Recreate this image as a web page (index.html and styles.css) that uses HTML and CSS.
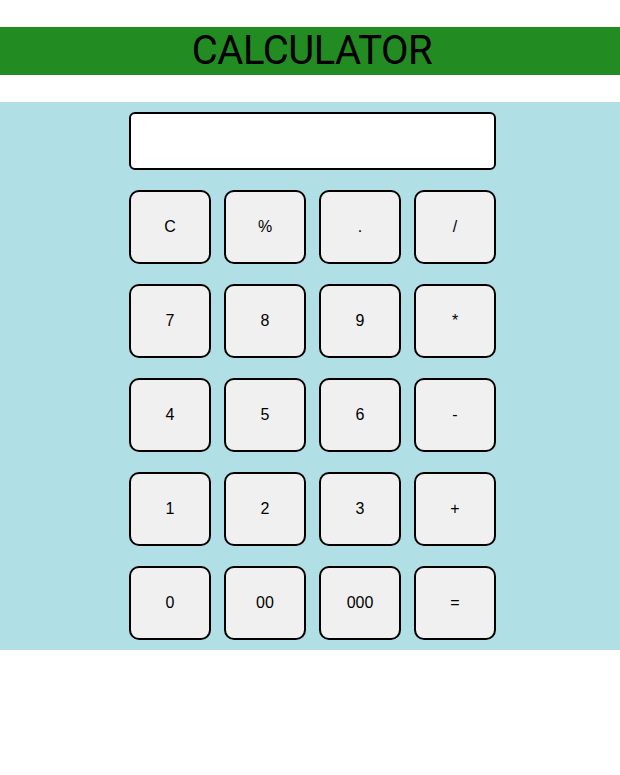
FILE: index.html
```html
<!DOCTYPE html>
<html>
<head>
<meta charset="utf-8">
<link rel="stylesheet" href="styles.css">
</head>
<body>
<h1 class="title">CALCULATOR</h1>
<div class="calc">
  <div class="pad">
    <div class="display"></div>
    <button class="key">C</button>
    <button class="key">%</button>
    <button class="key">.</button>
    <button class="key">/</button>
    <button class="key">7</button>
    <button class="key">8</button>
    <button class="key">9</button>
    <button class="key">*</button>
    <button class="key">4</button>
    <button class="key">5</button>
    <button class="key">6</button>
    <button class="key">-</button>
    <button class="key">1</button>
    <button class="key">2</button>
    <button class="key">3</button>
    <button class="key">+</button>
    <button class="key">0</button>
    <button class="key">00</button>
    <button class="key">000</button>
    <button class="key">=</button>
  </div>
</div>
</body>
</html>
```
FILE: styles.css
```css
body {
  margin: 0;
  font-family: "Liberation Sans", Arial, sans-serif;
  background: #ffffff;
}
.title {
  margin: 27px 0;
  height: 48px;
  line-height: 48px;
  background: #228b22;
  color: #000;
  text-align: center;
  font-family: Roboto, sans-serif;
  font-weight: 400;
  font-size: 40px;
  letter-spacing: -0.5px;
  padding-left: 4px;
}
.calc {
  background: #b0e0e6;
  padding: 10px 0 10px 5px;
  display: flex;
  justify-content: center;
}
.pad {
  display: grid;
  grid-template-columns: repeat(4, 82px);
  column-gap: 13px;
  row-gap: 20px;
}
.display {
  grid-column: 1 / -1;
  height: 58px;
  box-sizing: border-box;
  background: #fff;
  border: 2px solid #000;
  border-radius: 6px;
}
.key {
  height: 74px;
  box-sizing: border-box;
  background: #f0f0f0;
  border: 2px solid #000;
  border-radius: 10px;
  font-family: "Liberation Sans", Arial, sans-serif;
  font-size: 16px;
  color: #000;
  padding: 0;
}
```
